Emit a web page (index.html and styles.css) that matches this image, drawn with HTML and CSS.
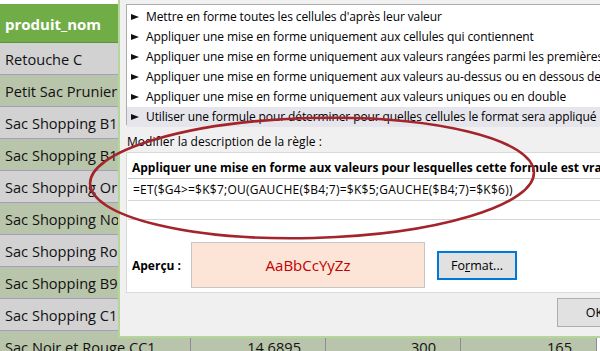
FILE: index.html
```html
<!DOCTYPE html>
<html>
<head>
    <meta charset="UTF-8">
    <meta name="viewport" content="width=device-width, initial-scale=1.0">
    <title>Mise en forme conditionnelle</title>
    <link rel="stylesheet" href="styles.css">
</head>
<body>
    <table class="sheet">
        <tr class="head"><td>produit_nom</td><td></td><td></td><td></td></tr>
        <tr class="gray"><td>Retouche C</td><td></td><td></td><td></td></tr>
        <tr class="green"><td>Petit Sac Prunier</td><td></td><td></td><td></td></tr>
        <tr class="gray"><td>Sac Shopping B1</td><td></td><td></td><td></td></tr>
        <tr class="green"><td>Sac Shopping B1</td><td></td><td></td><td></td></tr>
        <tr class="gray"><td>Sac Shopping Or</td><td></td><td></td><td></td></tr>
        <tr class="green"><td>Sac Shopping Noir</td><td></td><td></td><td></td></tr>
        <tr class="gray"><td>Sac Shopping Rose</td><td></td><td></td><td></td></tr>
        <tr class="green"><td>Sac Shopping B9</td><td></td><td></td><td></td></tr>
        <tr class="gray"><td>Sac Shopping C1</td><td></td><td></td><td></td></tr>
        <tr class="green"><td>Sac Noir et Rouge CC1</td><td class="num">14,6895</td><td class="num">300</td><td class="num">165</td></tr>
    </table>

    <div class="dialog">
        <ul class="rule-list">
            <li><span class="arrow"></span>Mettre en forme toutes les cellules d'après leur valeur</li>
            <li><span class="arrow"></span>Appliquer une mise en forme uniquement aux cellules qui contiennent</li>
            <li><span class="arrow"></span>Appliquer une mise en forme uniquement aux valeurs rangées parmi les premières ou les dernières valeurs</li>
            <li><span class="arrow"></span>Appliquer une mise en forme uniquement aux valeurs au-dessus ou en dessous de la moyenne</li>
            <li><span class="arrow"></span>Appliquer une mise en forme uniquement aux valeurs uniques ou en double</li>
            <li class="selected"><span class="arrow"></span>Utiliser une formule pour déterminer pour quelles cellules le format sera appliqué</li>
        </ul>

        <div class="section-label">Modifier la description de la règle :</div>

        <div class="rule-panel">
            <div class="rule-title">Appliquer une mise en forme aux valeurs pour lesquelles cette formule est vraie :</div>
            <div class="formula-box">
                <div class="formula">=ET($G4&gt;=$K$7;OU(GAUCHE($B4;7)=$K$5;GAUCHE($B4;7)=$K$6))</div>
            </div>
            <div class="preview-row">
                <span class="preview-label">Aperçu :</span>
                <div class="preview">AaBbCcYyZz</div>
                <button class="btn btn-focus">Fo<u>r</u>mat...</button>
            </div>
        </div>

        <div class="dialog-footer">
            <button class="btn">OK</button>
        </div>
    </div>

    <svg class="mark" width="600" height="351" viewBox="0 0 600 351">
        <ellipse cx="312" cy="178" rx="222" ry="60" transform="rotate(-1.5 312 178)" fill="none" stroke="#a3242a" stroke-width="2.6"/>
    </svg>
</body>
</html>
```

FILE: styles.css
```css
body {
    margin: 0;
    width: 600px;
    height: 351px;
    overflow: hidden;
    position: relative;
    background: #ffffff;
    font-family: 'Open Sans', 'Noto Sans', sans-serif;
}

.sheet {
    border-collapse: collapse;
    margin-top: 4px;
    font-size: 14.6px;
    color: #111;
    table-layout: fixed;
    width: 597px;
}

.sheet td {
    height: 30px;
    padding: 1px 5px 0 5px;
    border-bottom: 1px solid #a69dba;
    border-right: 1px solid #8f8aa0;
    white-space: nowrap;
    overflow: hidden;
}

.sheet td:nth-child(1) { width: 180px; }
.sheet td:nth-child(2) { width: 124px; }
.sheet td:nth-child(3) { width: 124px; }

.sheet .num {
    text-align: right;
    padding-right: 24px;
}

.head td {
    height: 37px;
    background: #70ad47;
    color: #fff;
    font-weight: bold;
    font-size: 15px;
    border-bottom: 1px solid #5e9339;
}

.gray td {
    background: #d2d2d2;
}

.green td {
    background: #b9c5ab;
}

/* dialog window */
.dialog {
    position: absolute;
    left: 118px;
    top: -10px;
    width: 540px;
    height: 348px;
    box-sizing: border-box;
    border: 2px solid #b4d69b;
    background: #f0f0f0;
    padding: 12px 0 0 6px;
    display: flex;
    flex-direction: column;
    font-size: 12px;
    color: #000;
}

.rule-list {
    list-style: none;
    margin: 0;
    padding: 2px 0 0 0;
    height: 121px;
    box-sizing: border-box;
    background: #fff;
    border: 1px solid #adadad;
    border-right: none;
}

.rule-list li {
    height: 20px;
    line-height: 20px;
    padding-left: 4px;
    white-space: nowrap;
    display: flex;
    align-items: center;
    letter-spacing: -0.1px;
}

.rule-list li.selected {
    background: #e5e5eb;
}

.arrow {
    width: 0;
    height: 0;
    border-top: 3px solid transparent;
    border-bottom: 3px solid transparent;
    border-left: 8px solid #111;
    margin-right: 7px;
}

.section-label {
    height: 20px;
    line-height: 20px;
    margin-top: 7px;
    padding-left: 1px;
    letter-spacing: 0.05px;
}

.rule-panel {
    height: 141px;
    box-sizing: border-box;
    background: #fff;
    border: 1px solid #d9d9d9;
    border-right: none;
    padding: 5px 0 0 0;
}

.rule-title {
    height: 20px;
    line-height: 20px;
    font-weight: bold;
    padding-left: 5px;
    white-space: nowrap;
}

.formula-box {
    height: 42px;
    margin-left: 1px;
    box-sizing: border-box;
    border-top: 1px solid #c9c9c9;
    border-bottom: 1px solid #d6d6d6;
}

.formula {
    height: 21px;
    line-height: 21px;
    padding-left: 5px;
    border-bottom: 1px solid #d6d6d6;
    white-space: nowrap;
    letter-spacing: 0.25px;
}

.preview-row {
    display: flex;
    align-items: center;
    margin-top: 22px;
    padding-left: 5px;
}

.preview-label {
    font-weight: bold;
    width: 59px;
}

.preview {
    width: 234px;
    height: 46px;
    box-sizing: border-box;
    background: #fce4d6;
    border: 1px solid #c6c6c6;
    color: #c00000;
    font-size: 15px;
    display: flex;
    align-items: center;
    justify-content: center;
}

.btn {
    font-family: inherit;
    font-size: 12.5px;
    color: #000;
    background: #e1e1e1;
    border: 1px solid #adadad;
    height: 29px;
    width: 80px;
    padding: 0;
}

.btn-focus {
    margin-left: 12px;
    border: 2px solid #0078d7;
}

.dialog-footer {
    display: flex;
    padding-top: 5px;
}

.dialog-footer .btn {
    margin-left: 431px;
    width: 75px;
}

.mark {
    position: absolute;
    left: 0;
    top: 0;
    pointer-events: none;
}
```
